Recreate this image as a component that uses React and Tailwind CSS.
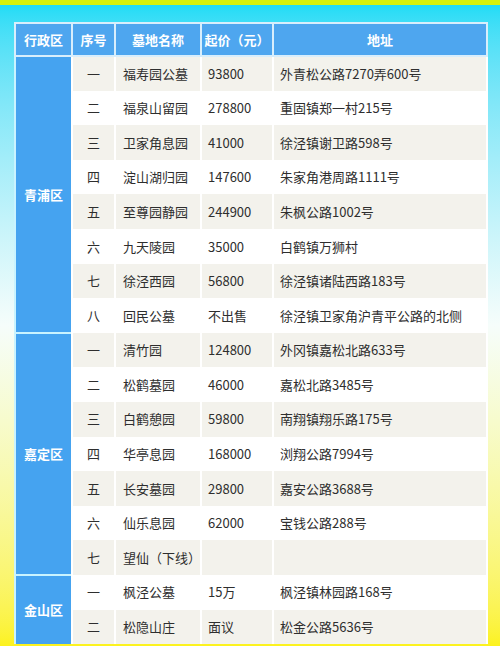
const ROWS = [
  {
    district: '青浦区',
    items: [
      ['一', '福寿园公墓', '93800', '外青松公路7270弄600号'],
      ['二', '福泉山留园', '278800', '重固镇郑一村215号'],
      ['三', '卫家角息园', '41000', '徐泾镇谢卫路598号'],
      ['四', '淀山湖归园', '147600', '朱家角港周路1111号'],
      ['五', '至尊园静园', '244900', '朱枫公路1002号'],
      ['六', '九天陵园', '35000', '白鹤镇万狮村'],
      ['七', '徐泾西园', '56800', '徐泾镇诸陆西路183号'],
      ['八', '回民公墓', '不出售', '徐泾镇卫家角沪青平公路的北侧'],
    ],
  },
  {
    district: '嘉定区',
    items: [
      ['一', '清竹园', '124800', '外冈镇嘉松北路633号'],
      ['二', '松鹤墓园', '46000', '嘉松北路3485号'],
      ['三', '白鹤憩园', '59800', '南翔镇翔乐路175号'],
      ['四', '华亭息园', '168000', '浏翔公路7994号'],
      ['五', '长安墓园', '29800', '嘉安公路3688号'],
      ['六', '仙乐息园', '62000', '宝钱公路288号'],
      ['七', '望仙（下线）', '', ''],
    ],
  },
  {
    district: '金山区',
    items: [
      ['一', '枫泾公墓', '15万', '枫泾镇林园路168号'],
      ['二', '松隐山庄', '面议', '松金公路5636号'],
    ],
  },
];

const HEADERS = ['行政区', '序号', '墓地名称', '起价（元）', '地址'];

export default function App() {
  let index = 0;
  return (
    <div
      className="w-[500px] h-[646px] overflow-hidden border-t-[5px] border-[#d6f20c] bg-gradient-to-b from-[#1fdcf6] via-[#f6fdfb] to-[#fcf21c] pt-[17px] pl-[14px]"
      style={{ fontFamily: '"Noto Sans CJK SC", "Noto Sans", sans-serif' }}
    >
      <table className="w-[472px] table-fixed border-collapse text-[13px] text-[#2e2e2e]">
        <colgroup>
          <col className="w-[57px]" />
          <col className="w-[43px]" />
          <col className="w-[86px]" />
          <col className="w-[72px]" />
          <col className="w-[214px]" />
        </colgroup>
        <thead>
          <tr className="h-[33px] bg-[#4ea6ef]">
            {HEADERS.map((h) => (
              <th
                key={h}
                className="border-2 border-[#d8eefc] font-bold text-white text-center whitespace-nowrap"
              >
                {h}
              </th>
            ))}
          </tr>
        </thead>
        <tbody>
          {ROWS.map((group) =>
            group.items.map((item, i) => {
              const striped = index++ % 2 === 0;
              return (
                <tr key={group.district + i} className={`h-[34.6px] ${striped ? 'bg-[#f3f2ec]' : 'bg-white'}`}>
                  {i === 0 && (
                    <td
                      rowSpan={group.items.length}
                      className="bg-[#45a3f0] border-l-2 border-t-2 border-[#c9f3ff] text-center font-bold text-white"
                    >
                      {group.district}
                    </td>
                  )}
                  <td className="border-l-2 border-white text-center">{item[0]}</td>
                  <td className="border-l-2 border-white pl-[7px] whitespace-nowrap">{item[1]}</td>
                  <td className="border-l-2 border-white pl-[6px] whitespace-nowrap">{item[2]}</td>
                  <td className="border-x-2 border-white pl-[6px] whitespace-nowrap">{item[3]}</td>
                </tr>
              );
            })
          )}
        </tbody>
      </table>
    </div>
  );
}
